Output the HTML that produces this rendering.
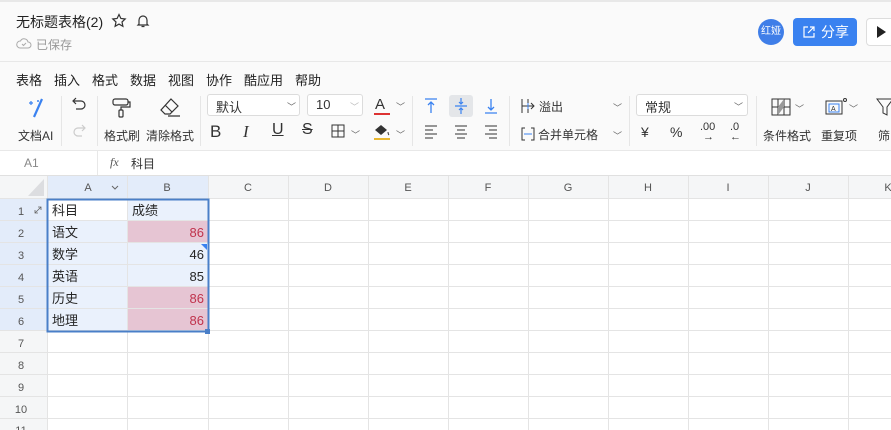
<!DOCTYPE html>
<html><head><meta charset="utf-8"><style>
*{margin:0;padding:0;box-sizing:border-box}
body{width:891px;height:430px;overflow:hidden;background:#fff;font-family:"Liberation Sans","Noto Sans CJK SC",sans-serif;color:#262626;position:relative}
.a{position:absolute;white-space:nowrap}
.t{font-size:12px;color:#333}
.m{position:absolute;top:70px;font-size:13px;color:#222;white-space:nowrap}
.ic{position:absolute}
.sep{position:absolute;width:1px;background:#e6e6e6}
.dd{position:absolute;height:22px;border:1px solid #dcdcdc;border-radius:3px;background:#fff;font-size:13px;padding:2px 8px;color:#333}
.chev{position:absolute;font-size:9px;color:#666}
</style></head><body>
<div class="a" style="left:0;top:0;width:891px;height:2px;background:#e8e8e8"></div>
<div class="a" style="left:0;top:2px;width:891px;height:148px;background:#fafafa"></div>
<div class="a" style="left:0;top:61px;width:891px;height:1px;background:#e8e8e8"></div>
<div class="a" style="left:16px;top:12px;font-size:14px;color:#222">无标题表格(2)</div>
<svg class="ic" style="left:111px;top:13px" width="16" height="16" viewBox="0 0 16 16"><path d="M8 1.5l1.9 4 4.3.5-3.2 3 .9 4.3L8 11.1l-3.9 2.2.9-4.3-3.2-3 4.3-.5z" fill="none" stroke="#333" stroke-width="1.2"/></svg>
<svg class="ic" style="left:135px;top:13px" width="16" height="16" viewBox="0 0 16 16"><path d="M4 11V7a4 4 0 018 0v4l1 1H3z M6.5 13.5h3" fill="none" stroke="#333" stroke-width="1.2"/></svg>
<svg class="ic" style="left:16px;top:36px" width="16" height="14" viewBox="0 0 16 14"><path d="M4 12h8a3 3 0 000-6 4 4 0 00-7.5-1A3.5 3.5 0 004 12z M6 8l1.5 1.5L10 7" fill="none" stroke="#aaa" stroke-width="1"/></svg>
<div class="a" style="left:36px;top:36px;font-size:12px;color:#999">已保存</div>
<div class="a" style="left:758px;top:19px;width:26px;height:26px;border-radius:50%;background:#3f7ee8;color:#fff;font-size:10px;line-height:26px;text-align:center">红娅</div>
<div class="a" style="left:793px;top:18px;width:64px;height:28px;border-radius:4px;background:#3a82f0;color:#fff;font-size:14px;line-height:28px;padding-left:28px">分享</div>
<svg class="ic" style="left:802px;top:25px" width="14" height="14" viewBox="0 0 14 14"><path d="M6 2H2v10h10V8 M8 2h4v4 M12 2L6 8" fill="none" stroke="#fff" stroke-width="1.2"/></svg>
<div class="a" style="left:866px;top:18px;width:40px;height:28px;border:1px solid #ddd;border-radius:4px;background:#fff"></div>
<svg class="ic" style="left:876px;top:26px" width="10" height="12"><path d="M1 0l9 6-9 6z" fill="#222"/></svg>

<div class="m" style="left:16px">表格</div><div class="m" style="left:54px">插入</div><div class="m" style="left:92px">格式</div><div class="m" style="left:130px">数据</div><div class="m" style="left:168px">视图</div><div class="m" style="left:206px">协作</div><div class="m" style="left:244px">酷应用</div><div class="m" style="left:295px">帮助</div>

<svg class="ic" style="left:26px;top:97px" width="20" height="22" viewBox="0 0 20 22"><path d="M16 2L8 20" stroke="#3a82f0" stroke-width="2.2"/><path d="M5 4v4M3 6h4" stroke="#3a82f0" stroke-width="1.2"/><circle cx="12" cy="4" r="1" fill="#3a82f0"/></svg>
<div class="a t" style="left:18px;top:127px">文档AI</div>
<div class="sep" style="left:61px;top:96px;height:50px"></div>
<svg class="ic" style="left:70px;top:97px" width="18" height="18" viewBox="0 0 18 18"><path d="M4 4h7a4 4 0 010 8H6 M6 1L3 4l3 3" fill="none" stroke="#333" stroke-width="1.2"/></svg>
<svg class="ic" style="left:70px;top:123px" width="18" height="18" viewBox="0 0 18 18"><path d="M14 5H8a4 4 0 000 8h4 M12 2l3 3-3 3" fill="none" stroke="#ccc" stroke-width="1.2"/></svg>
<div class="sep" style="left:97px;top:96px;height:50px"></div>
<svg class="ic" style="left:111px;top:97px" width="22" height="22" viewBox="0 0 22 22"><rect x="2" y="2" width="15" height="6" rx="2" fill="none" stroke="#333" stroke-width="1.2"/><path d="M17 5h2v5H10v3" fill="none" stroke="#333" stroke-width="1.2"/><rect x="8" y="13" width="4" height="7" rx="1" fill="none" stroke="#333" stroke-width="1.2"/></svg>
<div class="a t" style="left:104px;top:127px">格式刷</div>
<svg class="ic" style="left:158px;top:97px" width="24" height="22" viewBox="0 0 24 22"><path d="M13 2l7 7-8 8H7l-4-4z M7 8l7 7 M10 19h12" fill="none" stroke="#333" stroke-width="1.2"/></svg>
<div class="a t" style="left:146px;top:127px">清除格式</div>
<div class="sep" style="left:200px;top:96px;height:50px"></div>

<div class="dd" style="left:207px;top:94px;width:93px">默认</div><div class="chev" style="left:287px;top:100px">﹀</div>
<div class="dd" style="left:307px;top:94px;width:56px">10</div><div class="chev" style="left:350px;top:100px;color:#bbb">﹀</div>
<div class="a" style="left:375px;top:96px;font-size:15px;color:#333">A</div><div class="a" style="left:374px;top:113px;width:16px;height:2px;background:#d33"></div><div class="chev" style="left:396px;top:100px">﹀</div>
<div class="a" style="left:210px;top:122px;font-size:17px;color:#333">B</div>
<div class="a" style="left:243px;top:122px;font-size:17px;color:#333;font-style:italic;font-family:'Liberation Serif',serif">I</div>
<div class="a" style="left:272px;top:121px;font-size:16px;color:#333;text-decoration:underline">U</div>
<div class="a" style="left:302px;top:121px;font-size:16px;color:#333;text-decoration:line-through">S</div>
<svg class="ic" style="left:331px;top:124px" width="14" height="14"><rect x="1" y="1" width="12" height="12" fill="none" stroke="#333"/><path d="M7 1v12M1 7h12" stroke="#333"/></svg><div class="chev" style="left:351px;top:128px">﹀</div>
<svg class="ic" style="left:372px;top:122px" width="20" height="20" viewBox="0 0 20 20"><path d="M3 8l6-5 6 5-6 5z" fill="#333"/><path d="M16 10c0 2 1 3 1 3" stroke="#333"/><rect x="2" y="16" width="16" height="2" fill="#e8b730"/></svg><div class="chev" style="left:396px;top:128px">﹀</div>
<div class="sep" style="left:412px;top:96px;height:50px"></div>

<svg class="ic" style="left:422px;top:97px" width="18" height="18"><path d="M3 2h12M9 16V5M6 8l3-3 3 3" fill="none" stroke="#3a82f0" stroke-width="1.3"/></svg>
<div class="a" style="left:449px;top:95px;width:24px;height:22px;background:#e4e6e9;border-radius:3px"></div>
<svg class="ic" style="left:452px;top:97px" width="18" height="18"><path d="M3 9h12M9 1v6M9 11v6M7 5l2 2 2-2M7 13l2-2 2 2" fill="none" stroke="#3a82f0" stroke-width="1.2"/></svg>
<svg class="ic" style="left:482px;top:97px" width="18" height="18"><path d="M3 16h12M9 2v11M6 10l3 3 3-3" fill="none" stroke="#3a82f0" stroke-width="1.3"/></svg>
<svg class="ic" style="left:422px;top:124px" width="18" height="16"><path d="M3 2h12M3 6h8M3 10h12M3 14h8" stroke="#333"/></svg>
<svg class="ic" style="left:452px;top:124px" width="18" height="16"><path d="M3 2h12M5 6h8M3 10h12M5 14h8" stroke="#333"/></svg>
<svg class="ic" style="left:482px;top:124px" width="18" height="16"><path d="M3 2h12M7 6h8M3 10h12M7 14h8" stroke="#333"/></svg>
<div class="sep" style="left:509px;top:96px;height:50px"></div>

<svg class="ic" style="left:520px;top:98px" width="18" height="16"><path d="M2 1v14M2 8h12M11 5l3 3-3 3M8 1v14" fill="none" stroke="#333"/><path d="M8 5v6" stroke="#3a82f0"/></svg>
<div class="a" style="left:539px;top:98px;font-size:12px;color:#333">溢出</div><div class="chev" style="left:613px;top:101px">﹀</div>
<svg class="ic" style="left:520px;top:126px" width="16" height="16"><path d="M5 2H2v12h3M11 2h3v12h-3M4 8h8" fill="none" stroke="#333"/><path d="M4 8h8" stroke="#3a82f0"/></svg>
<div class="a" style="left:538px;top:126px;font-size:12px;color:#333">合并单元格</div><div class="chev" style="left:613px;top:129px">﹀</div>
<div class="sep" style="left:629px;top:96px;height:50px"></div>

<div class="dd" style="left:636px;top:94px;width:112px">常规</div><div class="chev" style="left:734px;top:100px">﹀</div>
<div class="a" style="left:641px;top:124px;font-size:14px;color:#333">¥</div>
<div class="a" style="left:670px;top:124px;font-size:14px;color:#333">%</div>
<div class="a" style="left:700px;top:122px;font-size:11px;color:#333;line-height:10px">.00<br>&nbsp;→</div>
<div class="a" style="left:730px;top:122px;font-size:11px;color:#333;line-height:10px">.0<br>←</div>
<div class="sep" style="left:756px;top:96px;height:50px"></div>

<svg class="ic" style="left:771px;top:98px" width="20" height="18"><rect x="1" y="1" width="18" height="16" fill="none" stroke="#333"/><path d="M7 1v16M13 1v16M1 9h18" stroke="#333"/><path d="M7 9l6-8v8zM7 17l6-8H7z" fill="#999"/></svg><div class="chev" style="left:795px;top:102px">﹀</div>
<div class="a t" style="left:763px;top:127px">条件格式</div>
<svg class="ic" style="left:824px;top:97px" width="24" height="20"><rect x="2" y="4" width="16" height="13" fill="none" stroke="#333"/><rect x="5" y="7" width="10" height="8" fill="none" stroke="#3a82f0"/><text x="7" y="14" font-size="7" fill="#333" font-family="Liberation Sans">A</text><circle cx="21" cy="3" r="1.5" fill="none" stroke="#333"/></svg><div class="chev" style="left:849px;top:102px">﹀</div>
<div class="a t" style="left:821px;top:127px">重复项</div>
<svg class="ic" style="left:876px;top:97px" width="18" height="20"><path d="M1 2h16l-6 8v8l-4-2v-6z" fill="none" stroke="#333"/></svg>
<div class="a t" style="left:878px;top:127px">筛</div>

<div class="a" style="left:0;top:150px;width:891px;height:1px;background:#e8e8e8"></div>
<div class="a" style="left:24px;top:156px;font-size:12px;color:#888">A1</div>
<div class="a" style="left:97px;top:150px;width:1px;height:26px;background:#e8e8e8"></div>
<div class="a" style="left:110px;top:155px;font-size:12px;color:#555;font-style:italic;font-family:'Liberation Serif',serif">fx</div>
<div class="a" style="left:131px;top:155px;font-size:12px;color:#333">科目</div>
<div class="a" style="left:0;top:175px;width:891px;height:1px;background:#e0e0e0"></div>

<svg class="ic" style="left:0;top:176px" width="891" height="254">
<rect x="0" y="0" width="891" height="23" fill="#f5f6f7"/>
<rect x="0" y="0" width="47" height="254" fill="#f5f6f7"/>
<path d="M44 3V20H28z" fill="#dcdde0"/>
<rect x="47" y="0" width="161" height="23" fill="#e3ecfa"/>
<rect x="0" y="23" width="47" height="132" fill="#e3ecfa"/>
<rect x="47" y="23" width="161" height="132" fill="#eaf1fc"/>
<rect x="47" y="23" width="80" height="22" fill="#fff"/>
<rect x="127" y="45" width="81" height="22" fill="#e6c5d3"/>
<rect x="127" y="111" width="81" height="44" fill="#e6c5d3"/>
<g stroke="#e4e4e4" stroke-width="1">
<path d="M47.5 0V254M127.5 0V254M208.5 0V254M288.5 0V254M368.5 0V254M448.5 0V254M528.5 0V254M608.5 0V254M688.5 0V254M768.5 0V254M848.5 0V254"/>
<path d="M0 22.5H891M0 44.5H891M0 66.5H891M0 88.5H891M0 110.5H891M0 132.5H891M0 154.5H891M0 176.5H891M0 198.5H891M0 220.5H891M0 242.5H891"/>
</g>
<rect x="47.5" y="23.5" width="161" height="132" fill="none" stroke="#4a7fc8" stroke-width="2"/>
<rect x="205" y="153" width="5" height="5" fill="#4a7fc8"/>
<path d="M201 68h6v6z" fill="#3a82f0"/>
<g font-family="Liberation Sans" font-size="11" fill="#555" text-anchor="middle">
<text x="88" y="15">A</text><text x="167" y="15">B</text><text x="248" y="15">C</text><text x="328" y="15">D</text><text x="408" y="15">E</text><text x="488" y="15">F</text><text x="568" y="15">G</text><text x="648" y="15">H</text><text x="728" y="15">I</text><text x="808" y="15">J</text><text x="888" y="15">K</text>
<text x="21" y="39">1</text><text x="21" y="61">2</text><text x="21" y="83">3</text><text x="21" y="105">4</text><text x="21" y="127">5</text><text x="21" y="149">6</text><text x="21" y="171">7</text><text x="21" y="193">8</text><text x="21" y="215">9</text><text x="21" y="237">10</text><text x="21" y="258">11</text>
</g>
<path d="M112 10l3 3 3-3" fill="none" stroke="#666"/>
<path d="M35 37l6-6M38 31h3v3M35 34v3h3" fill="none" stroke="#666" stroke-width=".8"/>
<g font-family="Liberation Sans,Noto Sans CJK SC" font-size="13" fill="#262626">
<text x="52" y="39">科目</text><text x="132" y="39">成绩</text>
<text x="52" y="61">语文</text><text x="52" y="83">数学</text><text x="52" y="105">英语</text><text x="52" y="127">历史</text><text x="52" y="149">地理</text>
</g>
<g font-family="Liberation Sans" font-size="13" text-anchor="end">
<text x="204" y="61" fill="#c0334d">86</text><text x="204" y="83" fill="#262626">46</text><text x="204" y="105" fill="#262626">85</text><text x="204" y="127" fill="#c0334d">86</text><text x="204" y="149" fill="#c0334d">86</text>
</g>
</svg>
</body></html>
